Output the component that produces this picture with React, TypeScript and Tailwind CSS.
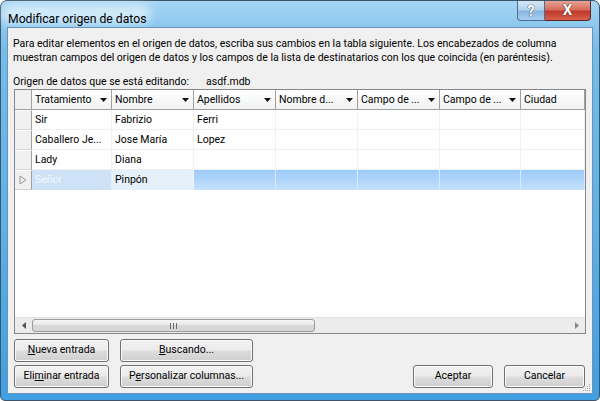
import React from 'react'

const cols = [
  { name: 'Tratamiento', w: 'w-[80px]', arrow: true },
  { name: 'Nombre', w: 'w-[82px]', arrow: true },
  { name: 'Apellidos', w: 'w-[82px]', arrow: true },
  { name: 'Nombre d...', w: 'w-[82px]', arrow: true },
  { name: 'Campo de ...', w: 'w-[82px]', arrow: true },
  { name: 'Campo de ...', w: 'w-[81px]', arrow: true },
  { name: 'Ciudad', w: 'flex-1', arrow: false },
]

const rows = [
  ['Sir', 'Fabrizio', 'Ferri'],
  ['Caballero Je...', 'Jose María', 'Lopez'],
  ['Lady', 'Diana', ''],
]

function DownArrow() {
  return (
    <svg width="7" height="4" viewBox="0 0 7 4" className="shrink-0">
      <path d="M0 0h7L3.5 4z" fill="#111" />
    </svg>
  )
}

function Btn({ children, className }: { children: React.ReactNode; className: string }) {
  return (
    <button className={`h-[23px] whitespace-nowrap rounded-[3px] border border-[#707070] bg-[linear-gradient(to_bottom,#f2f2f2_0%,#ebebeb_48%,#dddddd_52%,#cfcfcf_100%)] shadow-[inset_0_0_0_1px_#fbfbfb] text-[10.5px] text-black leading-none ${className}`}>
      {children}
    </button>
  )
}

export default function App() {
  return (
    <div className="w-[600px] h-[401px] bg-white font-['Segoe_UI',Roboto,sans-serif]">
      <div className="w-full h-full flex flex-col rounded-t-[7px] rounded-b-[5px] border border-[#3f5368] bg-[linear-gradient(to_bottom,#a6d5f3_0%,#74bdea_12%,#5eb1e6_55%,#3f9fe0_100%)] px-[6px] pb-[6px]">
        {/* title bar */}
        <div className="h-[26px] flex items-start shrink-0">
          <div className="relative pl-[1px] pt-[5px]">
            <span className="absolute left-[-6px] top-[3px] w-[150px] h-[20px] rounded-full bg-white/55 blur-[5px]" />
            <span className="relative text-[12.2px] leading-[18px] text-black whitespace-nowrap">Modificar origen de datos</span>
          </div>
          <div className="ml-auto mr-[2px] flex">
            <div className="w-[28px] h-[20px] rounded-bl-[4px] border border-t-0 border-[#4b6f93] bg-[linear-gradient(to_bottom,#d3e7f6_0%,#b3d2ec_45%,#8ab7de_55%,#a8cff0_100%)] flex items-center justify-center">
              <span className="text-[14px] font-bold text-white leading-none [text-shadow:0_0_1px_#28425e,0_0_1px_#28425e]">?</span>
            </div>
            <div className="w-[46px] h-[20px] rounded-br-[4px] border border-l-0 border-t-0 border-[#5a2a26] bg-[linear-gradient(to_bottom,#e8a393_0%,#d66d5e_45%,#c0392b_55%,#d8604c_100%)] flex items-center justify-center">
              <span className="text-[15px] font-bold text-white leading-none [text-shadow:0_0_1px_#3a1410,0_0_1px_#3a1410]">X</span>
            </div>
          </div>
        </div>

        {/* client area */}
        <div className="relative flex-1 flex flex-col border border-[#6e93b8] bg-[#f0f0f0] text-[10.5px] text-black">
          <p className="pl-[5px] pt-[9px] leading-[14px] whitespace-nowrap">
            Para editar elementos en el origen de datos, escriba sus cambios en la tabla siguiente. Los encabezados de columna
            <br />
            muestran campos del origen de datos y los campos de la lista de destinatarios con los que coincida (en paréntesis).
          </p>
          <div className="mt-[10px] pl-[5px] h-[14px] leading-[14px] flex whitespace-nowrap">
            <span className="w-[193px] shrink-0">Origen de datos que se está editando:</span>
            <span>asdf.mdb</span>
          </div>

          {/* grid */}
          <div className="ml-[6px] w-[572px] h-[245px] border border-[#828790] bg-white flex flex-col">
            <div className="h-[20px] flex border-b border-[#a0a0a0] bg-[linear-gradient(to_bottom,#ffffff,#f1f2f4)]">
              <div className="w-[17px] border-r border-[#a0a0a0] bg-[#f0f0f0]" />
              {cols.map((c, i) => (
                <div key={i} className={`${c.w} flex items-center pl-[3px] pr-[4px] border-r border-[#a0a0a0] overflow-hidden`}>
                  <span className="flex-1 whitespace-nowrap leading-[19px]">{c.name}</span>
                  {c.arrow && <DownArrow />}
                </div>
              ))}
            </div>
            {rows.map((r, ri) => (
              <div key={ri} className="h-[20px] flex">
                <div className="w-[17px] bg-[#f0f0f0] border-r border-b border-r-[#a0a0a0] border-b-[#d4d4d4] border-t border-t-white" />
                {cols.map((c, i) => (
                  <div key={i} className={`${c.w} flex items-center pl-[3px] border-r border-b border-[#f0f0f0] whitespace-nowrap overflow-hidden`}>
                    {r[i] ?? ''}
                  </div>
                ))}
              </div>
            ))}
            {/* current row */}
            <div className="h-[20px] flex">
              <div className="w-[17px] bg-[#f0f0f0] border-r border-b border-r-[#a0a0a0] border-b-[#d4d4d4] border-t border-t-white flex items-center justify-center">
                <svg width="8" height="10" viewBox="0 0 8 10">
                  <path d="M1 1l6 4-6 4z" fill="none" stroke="#9a9a9a" strokeWidth="1" />
                </svg>
              </div>
              <div className="w-[80px] flex items-center pl-[3px] bg-[#cde2f7] text-[#f4f7fa] border-r border-[#e3eefa]">Señor</div>
              <div className="w-[82px] flex items-center pl-[3px] bg-[#e6f0fb] border-r border-[#f0f5fc]">Pinpón</div>
              {cols.slice(2).map((c, i) => (
                <div key={i} className={`${c.w} bg-[linear-gradient(to_bottom,#9ccaf8,#c4e1fd)] border-r border-[#dbeafb]`} />
              ))}
            </div>
            <div className="flex-1" />
            {/* horizontal scrollbar */}
            <div className="h-[16px] flex items-stretch bg-[#ececec] border-t border-[#e2e2e2]">
              <div className="w-[17px] flex items-center justify-center">
                <svg width="4" height="7" viewBox="0 0 4 7"><path d="M4 0v7L0 3.5z" fill="#555" /></svg>
              </div>
              <div className="w-[283px] my-[1px] rounded-[3px] border border-[#9c9c9c] bg-[linear-gradient(to_bottom,#f5f5f5,#e6e6e6_50%,#d9d9d9_50%,#d4d4d4)] flex items-center justify-center">
                <svg width="7" height="6" viewBox="0 0 7 6">
                  <path d="M0.5 0v6M3.5 0v6M6.5 0v6" stroke="#6b6b6b" strokeWidth="1" />
                </svg>
              </div>
              <div className="flex-1" />
              <div className="w-[17px] flex items-center justify-center">
                <svg width="4" height="7" viewBox="0 0 4 7"><path d="M0 0v7L4 3.5z" fill="#888" /></svg>
              </div>
            </div>
          </div>

          {/* buttons */}
          <div className="mt-[5px] ml-[6px] flex">
            <Btn className="w-[95px]"><u>N</u>ueva entrada</Btn>
            <Btn className="w-[133px] ml-[11px]"><u>B</u>uscando...</Btn>
          </div>
          <div className="mt-[3px] ml-[6px] mr-[7px] flex">
            <Btn className="w-[95px]">Eli<u>m</u>inar entrada</Btn>
            <Btn className="w-[133px] ml-[11px]">P<u>e</u>rsonalizar columnas...</Btn>
            <Btn className="w-[80px] ml-auto">Aceptar</Btn>
            <Btn className="w-[81px] ml-[11px]">Cancelar</Btn>
          </div>

          {/* size grip */}
          <svg width="9" height="9" viewBox="0 0 9 9" className="absolute right-[1px] bottom-[1px]">
            <g fill="#a7a7a7">
              <rect x="7" y="1" width="1" height="1" />
              <rect x="5" y="3" width="1" height="1" />
              <rect x="7" y="3" width="1" height="1" />
              <rect x="3" y="5" width="1" height="1" />
              <rect x="5" y="5" width="1" height="1" />
              <rect x="7" y="5" width="1" height="1" />
              <rect x="1" y="7" width="1" height="1" />
              <rect x="3" y="7" width="1" height="1" />
              <rect x="5" y="7" width="1" height="1" />
              <rect x="7" y="7" width="1" height="1" />
            </g>
          </svg>
        </div>
      </div>
    </div>
  )
}
